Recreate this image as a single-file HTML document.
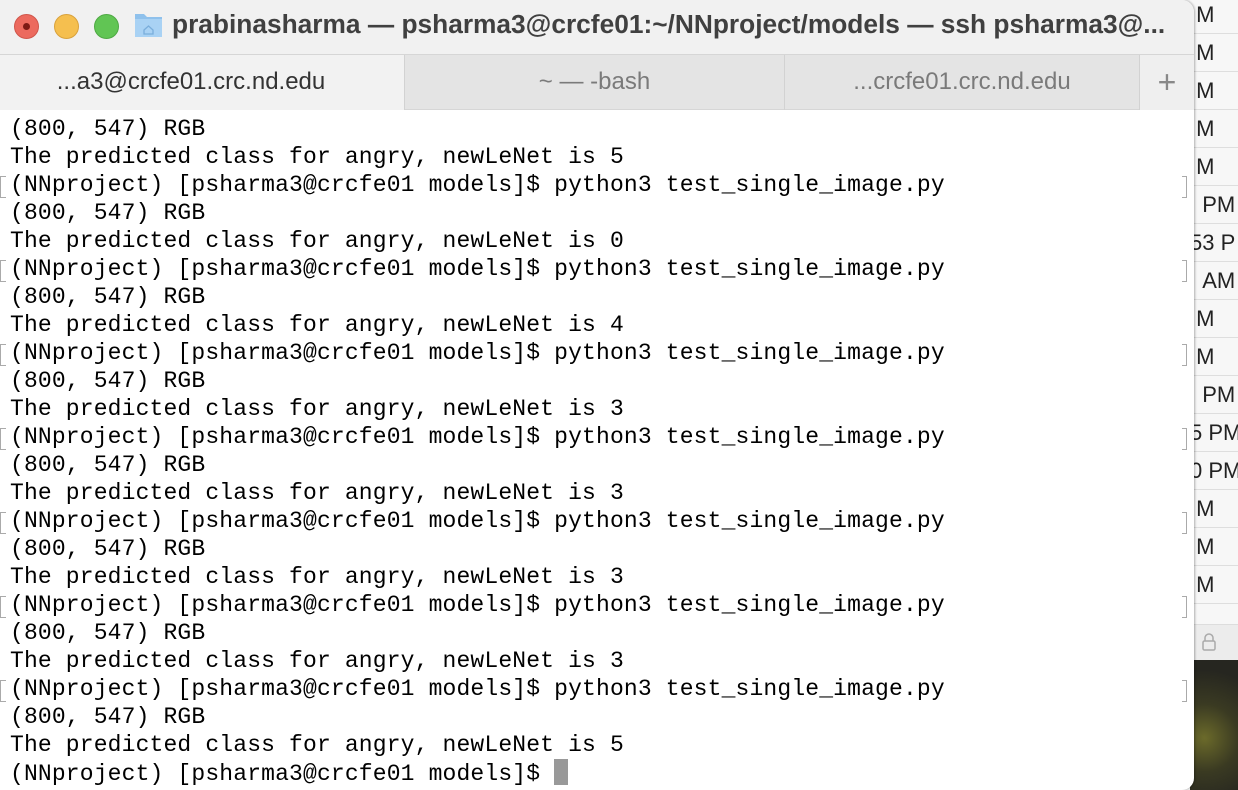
<!DOCTYPE html>
<html><head><style>
body{margin:0;width:1238px;height:790px;overflow:hidden;background:#f4f4f4;position:relative;font-family:"Liberation Sans",sans-serif}
.side{position:absolute;left:1190px;top:0;width:48px;height:790px;background:#f7f7f7;overflow:hidden}
.row{position:absolute;left:0;width:48px;height:37px;border-bottom:1px solid #dedede;font-size:22px;color:#222;line-height:37px;white-space:nowrap;overflow:hidden}
.dark{position:absolute;left:1190px;top:660px;width:48px;height:130px;background:radial-gradient(circle at 30% 60%,#6b6a2a,#3a3a22 40%,#262620 80%)}
.win{position:absolute;left:0;top:0;width:1194px;height:790px;background:#fff;border-radius:0 12px 12px 0;overflow:hidden;box-shadow:1px 0 2px rgba(0,0,0,.3)}
.title{position:absolute;left:0;top:0;width:1194px;height:54px;background:#f1f1f1}
.dot{position:absolute;top:14px;width:25px;height:25px;border-radius:50%}
.ttl{position:absolute;left:172px;top:9px;font-size:26.3px;font-weight:bold;color:#404040;white-space:nowrap}
.tabs{position:absolute;left:0;top:54px;width:1194px;height:56px;background:#e4e4e4;border-top:1px solid #d6d6d6;border-bottom:1px solid #d6d6d6;box-sizing:border-box}
.tab{position:absolute;top:0;height:55px;line-height:54px;text-align:center;font-size:24px;color:#7a7a7a;border-right:1px solid #d2d2d2;box-sizing:border-box;white-space:nowrap}
.term{position:absolute;left:10px;top:115px;font-family:"Liberation Mono",monospace;font-size:23px;line-height:28px;color:#000;white-space:pre;letter-spacing:0.15px}
.cur{display:inline-block;width:14px;height:26px;background:#999;vertical-align:-5px}
.br{position:absolute;left:0;width:5px;height:20px;border:1px solid #aaa;border-right:none}
.rb{position:absolute;left:1182px;width:4px;height:20px;border:1px solid #aaa;border-left:none}
</style></head><body>
<div class="side">
<div class="row" style="top:-4px">&nbsp;M</div>
<div class="row" style="top:34px">&nbsp;M</div>
<div class="row" style="top:72px">&nbsp;M</div>
<div class="row" style="top:110px">&nbsp;M</div>
<div class="row" style="top:148px">&nbsp;M</div>
<div class="row" style="top:186px">&nbsp;&nbsp;PM</div>
<div class="row" style="top:224px">53 P</div>
<div class="row" style="top:262px">&nbsp;&nbsp;AM</div>
<div class="row" style="top:300px">&nbsp;M</div>
<div class="row" style="top:338px">&nbsp;M</div>
<div class="row" style="top:376px">&nbsp;&nbsp;PM</div>
<div class="row" style="top:414px">5 PM</div>
<div class="row" style="top:452px">0 PM</div>
<div class="row" style="top:490px">&nbsp;M</div>
<div class="row" style="top:528px">&nbsp;M</div>
<div class="row" style="top:566px">&nbsp;M</div>
<div class="row" style="top:624px;height:36px;background:#ececec;border-top:1px solid #ddd;border-bottom:none"><svg style="position:absolute;left:12px;top:8px" width="14" height="18" viewBox="0 0 14 18"><path d="M3 8V5a4 4 0 0 1 8 0v3" fill="none" stroke="#aaa" stroke-width="1.5"/><rect x="1" y="8" width="12" height="9" rx="1.5" fill="none" stroke="#aaa" stroke-width="1.5"/></svg></div>
</div>
<div class="dark"></div>
<div class="win">
<div class="title">
<div class="dot" style="left:14px;background:#ec6a5e;border:1px solid #d0564b;box-sizing:border-box"><div style="position:absolute;left:8px;top:8px;width:7px;height:7px;border-radius:50%;background:#7d1a14"></div></div>
<div class="dot" style="left:54px;background:#f5bf4f;border:1px solid #d9a23c;box-sizing:border-box"></div>
<div class="dot" style="left:94px;background:#61c554;border:1px solid #4ea943;box-sizing:border-box"></div>
<svg style="position:absolute;left:134px;top:11px" width="29" height="27" viewBox="0 0 29 27"><path d="M1 3h9l3 3h15v20H1z" fill="#8fc1ec"/><rect x="1" y="8" width="27" height="18" fill="#a9d2f4"/><path d="M10 19l4.5-4 4.5 4v4h-9z" fill="none" stroke="#7aaedb" stroke-width="1.3"/></svg>
<div class="ttl">prabinasharma — psharma3@crcfe01:~/NNproject/models — ssh psharma3@...</div>
</div>
<div class="tabs">
<div class="tab" style="left:0;width:405px;padding-right:22px;background:#f2f2f2;color:#333">...a3@crcfe01.crc.nd.edu</div>
<div class="tab" style="left:405px;width:380px">~ — -bash</div>
<div class="tab" style="left:785px;width:355px">...crcfe01.crc.nd.edu</div>
<div class="tab" style="left:1140px;width:54px;background:#efefef;border:none;font-size:32px;color:#888;font-weight:300">+</div>
</div>
<div class="term">(800, 547) RGB
The predicted class for angry, newLeNet is 5
(NNproject) [psharma3@crcfe01 models]$ python3 test_single_image.py
(800, 547) RGB
The predicted class for angry, newLeNet is 0
(NNproject) [psharma3@crcfe01 models]$ python3 test_single_image.py
(800, 547) RGB
The predicted class for angry, newLeNet is 4
(NNproject) [psharma3@crcfe01 models]$ python3 test_single_image.py
(800, 547) RGB
The predicted class for angry, newLeNet is 3
(NNproject) [psharma3@crcfe01 models]$ python3 test_single_image.py
(800, 547) RGB
The predicted class for angry, newLeNet is 3
(NNproject) [psharma3@crcfe01 models]$ python3 test_single_image.py
(800, 547) RGB
The predicted class for angry, newLeNet is 3
(NNproject) [psharma3@crcfe01 models]$ python3 test_single_image.py
(800, 547) RGB
The predicted class for angry, newLeNet is 3
(NNproject) [psharma3@crcfe01 models]$ python3 test_single_image.py
(800, 547) RGB
The predicted class for angry, newLeNet is 5
(NNproject) [psharma3@crcfe01 models]$ <span class="cur"></span></div>
<div class="br" style="top:176px"></div><div class="br" style="top:260px"></div><div class="br" style="top:344px"></div><div class="br" style="top:428px"></div><div class="br" style="top:512px"></div><div class="br" style="top:596px"></div><div class="br" style="top:680px"></div>
<div class="rb" style="top:176px"></div><div class="rb" style="top:260px"></div><div class="rb" style="top:344px"></div><div class="rb" style="top:428px"></div><div class="rb" style="top:512px"></div><div class="rb" style="top:596px"></div><div class="rb" style="top:680px"></div>
</div>
</body></html>
